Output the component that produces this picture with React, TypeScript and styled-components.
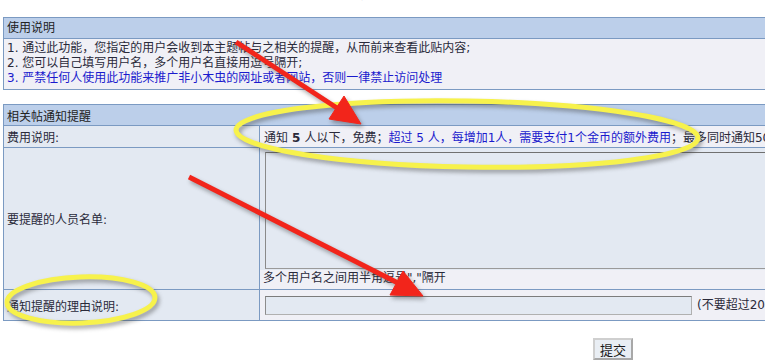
import React from 'react'
import styled, { createGlobalStyle } from 'styled-components'

const GlobalStyle = createGlobalStyle`
  body {
    margin: 0;
    background: #fff;
    overflow: hidden;
    font-family: "DejaVu Sans", "Noto Sans CJK SC", sans-serif;
    font-size: 12px;
    color: #2a2a3a;
  }
`

const Page = styled.div`
  position: relative;
  width: 765px;
  height: 363px;
  overflow: hidden;
`

const TopStrip = styled.div`
  height: 4px;
  overflow: hidden;
  white-space: nowrap;
`

const TopLine = styled.div`
  margin-top: -12px;
  padding-left: 5px;
  line-height: 15px;
  color: #2b2b55;
`

const Red = styled.span`
  color: #e8231a;
  margin: 0 12px;
`

const Box = styled.div`
  width: 1000px;
  margin: 13px 0 0 3px;
  border: 1px solid #7b9ac2;
`

const Header = styled.div`
  height: 20px;
  line-height: 20px;
  padding-left: 3px;
  background: #bccfea;
  border-bottom: 1px solid #7b9ac2;
  color: #222;
`

const Notes = styled.div`
  background: #f0f0f6;
  padding: 2px 3px 3px;
  line-height: 15px;
`

const Note = styled.div<{ $blue?: boolean }>`
  color: ${p => (p.$blue ? '#1a1acd' : '#2a2a3a')};
`

const Table = styled.table`
  width: 1002px;
  margin: 14px 0 0 3px;
  border-collapse: collapse;
  border: 1px solid #7b9ac2;
  td {
    border: 1px solid #7b9ac2;
    padding: 0;
    vertical-align: middle;
  }
`

const HeadCell = styled.td`
  height: 20px;
  padding-left: 3px !important;
  background: #bccfea;
  color: #222;
`

const Label = styled.td<{ $h: number }>`
  width: 252px;
  height: ${p => p.$h}px;
  padding-left: 3px !important;
  background: #e3e9f2;
`

const Value = styled.td`
  background: #f0f0f6;
  padding-left: 4px !important;
  white-space: nowrap;
`

const Blue = styled.span`
  color: #1a1acd;
`

const Num = styled.b`
  margin: 0 4px;
`

const AreaWrap = styled.div`
  background: #e3e9f2;
  padding: 4px 5px 1px;
`

const TextArea = styled.textarea`
  display: block;
  width: 700px;
  height: 117px;
  box-sizing: border-box;
  margin: 0;
  background: #e3e9f2;
  border: 1px solid #9a9a9a;
  border-top-color: #707070;
  border-left-color: #8a8a8a;
  resize: none;
`

const Hint = styled.div`
  background: #f0f0f6;
  padding: 1px 3px 3px;
  line-height: 15px;
`

const ReasonCell = styled.td`
  background: #f0f0f6;
  padding-left: 5px !important;
  white-space: nowrap;
`

const Input = styled.input`
  width: 427px;
  height: 19px;
  box-sizing: border-box;
  margin: 0 5px 0 0;
  vertical-align: middle;
  background: #e3e9f2;
  border: 1px solid #b0b0b0;
  border-top-color: #7c7c7c;
  border-left-color: #8c8c8c;
`

const ButtonRow = styled.div`
  padding: 17px 0 0 593px;
`

const Submit = styled.button`
  width: 40px;
  height: 22px;
  padding: 0;
  font-family: "Noto Sans CJK SC", sans-serif;
  font-size: 13px;
  color: #1a1a1a;
  background: #e9eef4;
  border: 2px solid #a8a8a8;
  border-top-color: #cfcfcf;
  border-left-color: #cfcfcf;
`

const Overlay = styled.svg`
  position: absolute;
  left: 0;
  top: 0;
  pointer-events: none;
  filter: drop-shadow(2px 3px 2px rgba(60, 60, 60, 0.45));
`

const Marks: React.FC = () => (
  <Overlay width={765} height={363} viewBox='0 0 765 363'>
    <g fill='none' stroke='#f7f24c' strokeWidth={5}>
      <ellipse cx={467} cy={134} rx={231} ry={33} transform='rotate(1 467 134)' />
      <ellipse cx={81} cy={300} rx={74} ry={23} transform='rotate(-2 81 300)' />
    </g>
    <g fill='#f2251b' stroke='#f2251b'>
      <line x1={236} y1={42} x2={337} y2={108} strokeWidth={5} />
      <polygon points='361,124 329,119 344,96' strokeWidth={1} />
      <line x1={189} y1={177} x2={398} y2={283} strokeWidth={5} />
      <polygon points='423,296 390,295 403,271' strokeWidth={1} />
    </g>
  </Overlay>
)

const App: React.FC = () => {
  return (
    <Page>
      <GlobalStyle />
      <TopStrip>
        <TopLine>
          您当前的<Red>金币数</Red>为：请注意每次通知都会扣除金币&nbsp;&nbsp;一旦发送则无法撤回&nbsp;&nbsp;请慎重使用
        </TopLine>
      </TopStrip>
      <Box>
        <Header>使用说明</Header>
        <Notes>
          <Note>1. 通过此功能，您指定的用户会收到本主题帖与之相关的提醒，从而前来查看此贴内容;</Note>
          <Note>2. 您可以自己填写用户名，多个用户名直接用逗号隔开;</Note>
          <Note $blue>3. 严禁任何人使用此功能来推广非小木虫的网址或者网站，否则一律禁止访问处理</Note>
        </Notes>
      </Box>
      <Table>
        <tbody>
          <tr>
            <HeadCell colSpan={2}>相关帖通知提醒</HeadCell>
          </tr>
          <tr>
            <Label $h={21}>费用说明:</Label>
            <Value>
              通知<Num>5</Num>人以下，免费；
              <Blue>超过 5 人，每增加1人，需要支付1个金币的额外费用</Blue>；最多同时通知50人
            </Value>
          </tr>
          <tr>
            <Label $h={141}>要提醒的人员名单:</Label>
            <td>
              <AreaWrap>
                <TextArea />
              </AreaWrap>
              <Hint>多个用户名之间用半角逗号","隔开</Hint>
            </td>
          </tr>
          <tr>
            <Label $h={30}>通知提醒的理由说明:</Label>
            <ReasonCell>
              <Input type='text' />
              (不要超过20个字)
            </ReasonCell>
          </tr>
        </tbody>
      </Table>
      <ButtonRow>
        <Submit type='submit'>提交</Submit>
      </ButtonRow>
      <Marks />
    </Page>
  )
}

export default App
